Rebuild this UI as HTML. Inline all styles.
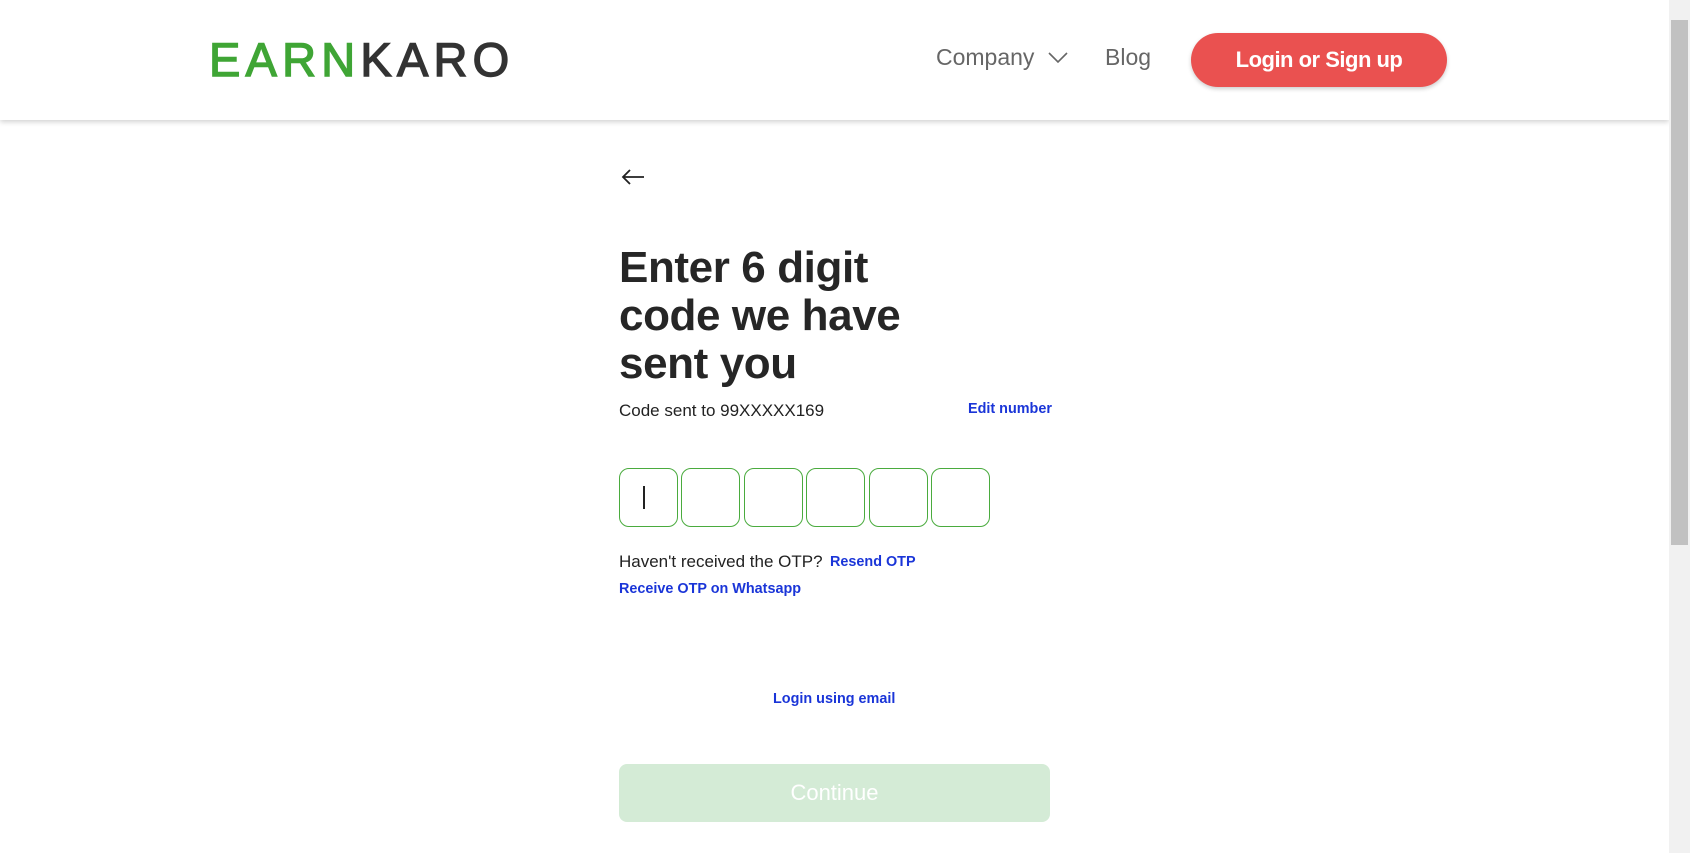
<!DOCTYPE html>
<html><head><meta charset="utf-8"><style>
*{margin:0;padding:0;box-sizing:border-box}
body{width:1690px;height:853px;overflow:hidden;background:#fff;font-family:"Liberation Sans",sans-serif;position:relative}
.hdr{position:absolute;left:0;top:0;width:1669px;height:120px;background:#fff;box-shadow:0 2px 5px rgba(0,0,0,.18)}
.logo{position:absolute;left:209px;top:35px;font-size:47px;letter-spacing:5.2px;font-weight:normal;-webkit-text-stroke:1.4px;line-height:50px}
.logo .g{color:#3fa535;-webkit-text-stroke-color:#3fa535}.logo .d{color:#333;-webkit-text-stroke-color:#333}
.nav{position:absolute;top:44px;font-size:23px;color:#666;line-height:26px}
.btn{position:absolute;left:1191px;top:33px;width:256px;height:54px;border-radius:27px;background:#ea5150;color:#fff;font-weight:bold;font-size:22px;text-align:center;line-height:54px;letter-spacing:-0.5px;box-shadow:0 2px 4px rgba(0,0,0,.2)}
.sb{position:absolute;right:0;top:0;width:21px;height:853px;background:#f1f1f1}
.sb .th{position:absolute;left:2px;top:20px;width:17px;height:525px;background:#c1c1c1}
.a{position:absolute}
h1{position:absolute;left:619px;top:244px;font-size:44px;line-height:48px;color:#262626;font-weight:bold;letter-spacing:-0.4px}
.t{font-size:17px;color:#222}
.l{font-size:14.4px;color:#1a35d8;font-weight:bold}
.box{position:absolute;top:468px;width:59px;height:59px;border:1px solid #4aab3e;border-radius:10px}
.cont{position:absolute;left:619px;top:764px;width:431px;height:58px;background:#d4ebd6;border-radius:8px;color:#fff;font-size:22px;text-align:center;line-height:58px}
</style></head><body>
<div class="hdr">
<div class="logo"><span class="g">EARN</span><span class="d">KARO</span></div>
<div class="nav" style="left:936px">Company <svg width="22" height="14" viewBox="0 0 22 14" style="margin-left:6px"><path d="M2 2 L11 11 L20 2" fill="none" stroke="#666" stroke-width="1.6"/></svg></div>
<div class="nav" style="left:1105px">Blog</div>
<div class="btn">Login or Sign up</div>
</div>
<div class="sb"><div class="th"></div></div>
<svg class="a" style="left:620px;top:168px" width="26" height="18" viewBox="0 0 26 18"><path d="M24 9 H3 M10 2 L3 9 L10 16" fill="none" stroke="#222" stroke-width="1.8"/></svg>
<h1>Enter 6 digit<br>code we have<br>sent you</h1>
<div class="a t" style="left:619px;top:401px">Code sent to 99XXXXX169</div>
<div class="a l" style="left:968px;top:401px">Edit number</div>
<div class="box" style="left:619px"><div style="position:absolute;left:23px;top:17px;width:1.5px;height:23px;background:#222"></div></div>
<div class="box" style="left:681px"></div>
<div class="box" style="left:744px"></div>
<div class="box" style="left:806px"></div>
<div class="box" style="left:869px"></div>
<div class="box" style="left:931px"></div>
<div class="a t" style="left:619px;top:552px">Haven't received the OTP?</div>
<div class="a l" style="left:830px;top:554px">Resend OTP</div>
<div class="a l" style="left:619px;top:581px">Receive OTP on Whatsapp</div>
<div class="a l" style="left:773px;top:691px">Login using email</div>
<div class="cont">Continue</div>
</body></html>
